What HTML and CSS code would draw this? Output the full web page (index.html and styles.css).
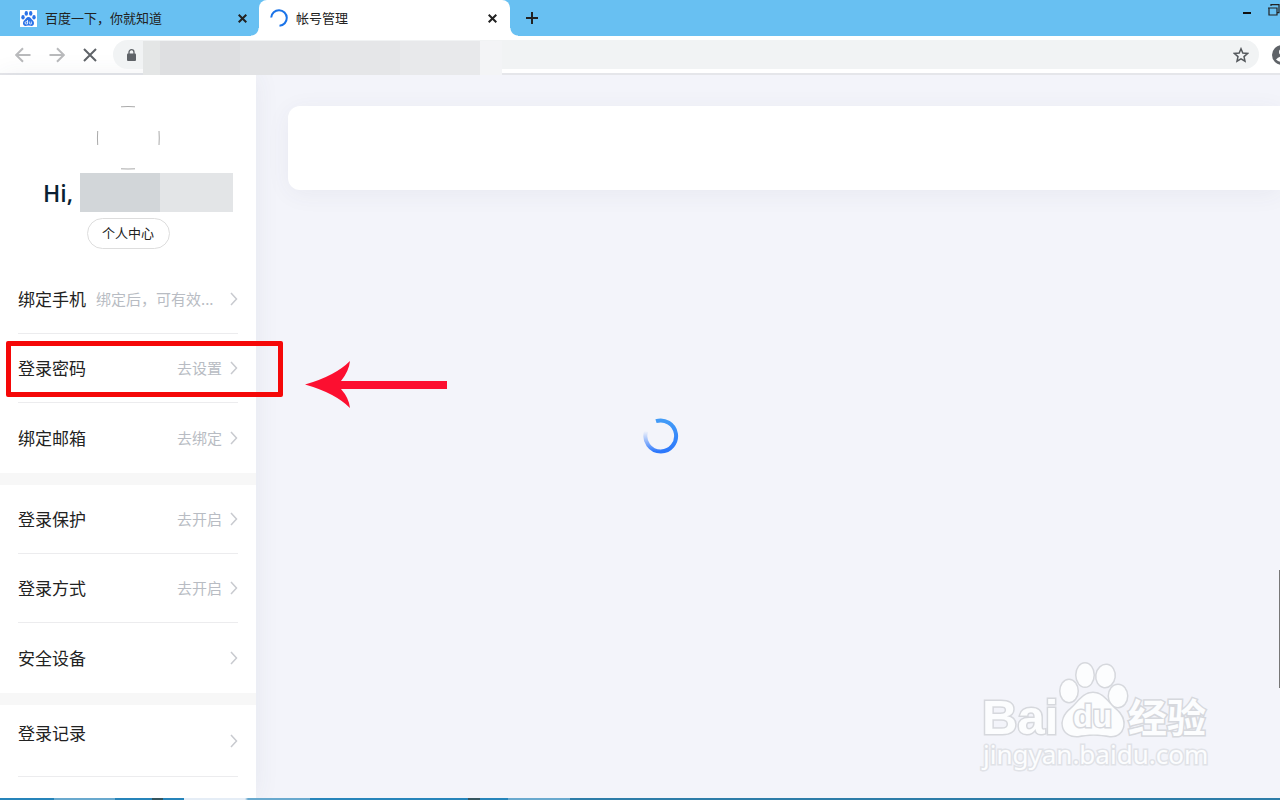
FILE: index.html
```
<!DOCTYPE html>
<html lang="zh-CN">
<head>
  <meta charset="UTF-8" />
  <meta name="viewport" content="width=device-width, initial-scale=1.0"/>
  <title>帐号管理</title>
  <link rel="stylesheet" href="styles.css">
</head>
<body>
  <header class="tabs">
    <div class="tab">
      <svg class="favicon" width="17" height="17" viewBox="0 0 17 17">
        <rect width="17" height="17" fill="#fff"/>
        <g fill="#2b73e8">
          <ellipse cx="3" cy="7.200" rx="1.700" ry="2.200"/>
          <ellipse cx="6.300" cy="3.400" rx="1.700" ry="2.300"/>
          <ellipse cx="10.700" cy="3.400" rx="1.700" ry="2.300"/>
          <ellipse cx="14" cy="7.200" rx="1.700" ry="2.200"/>
          <path d="M8.500 7c2.200 0 2.700 2 4.200 3.300 1.800 1.500 2 5.700-1.300 5.700-1.200 0-1.800-.4-2.900-.4s-1.700.4-2.900.4c-3.300 0-3.100-4.200-1.300-5.700C5.800 9 6.300 7 8.500 7z"/>
        </g>
        <path d="M7.500 10v4H6.200a1 1 0 0 1 0-2.300h1.300M9.300 11.500V13q0 1 1 1h1v-2.500" fill="none" stroke="#fff" stroke-width=".8"/>
      </svg>
      <span class="tab-title">百度一下，你就知道</span>
      <button class="tab-close" aria-label="关闭">
        <svg width="9" height="9" viewBox="0 0 9 9"><path d="M.7.7l7.600 7.600M8.300.7L.7 8.300"/></svg>
      </button>
    </div>
    <div class="tab active">
      <svg class="favicon" width="18" height="18" viewBox="0 0 18 18">
        <path d="M1.200 8.500A7.800 7.800 0 1 1 9.500 16.800" fill="none" stroke="#1a73e8" stroke-width="2"/>
      </svg>
      <span class="tab-title">帐号管理</span>
      <button class="tab-close" aria-label="关闭">
        <svg width="9" height="9" viewBox="0 0 9 9"><path d="M.7.7l7.600 7.600M8.300.7L.7 8.300"/></svg>
      </button>
    </div>
    <button class="new-tab" aria-label="新标签页">
      <svg width="12" height="12" viewBox="0 0 12 12"><path d="M6 0v12M0 6h12"/></svg>
    </button>
    <div class="window-buttons">
      <button aria-label="最小化"><svg width="8" height="12" viewBox="0 0 8 12"><path d="M0 9h8" stroke="#111" stroke-width="2"/></svg></button>
      <button aria-label="还原"><svg width="12" height="12" viewBox="0 0 12 12"><path d="M1 4h8v7H1zM0 4h9M3 2V.7h8v8H9.500" fill="none" stroke="#222" stroke-width="1.200"/></svg></button>
    </div>
  </header>

  <div class="toolbar">
    <button class="nav-btn dim" aria-label="后退"><svg width="16" height="16" viewBox="0 0 16 16"><path d="M15.500 8H1.500M8 1.200L1.200 8 8 14.800"/></svg></button>
    <button class="nav-btn dim" aria-label="前进"><svg width="16" height="16" viewBox="0 0 16 16"><path d="M.5 8h14M8 1.200L14.800 8 8 14.800"/></svg></button>
    <button class="nav-btn" aria-label="停止"><svg width="16" height="16" viewBox="0 0 16 16"><path d="M1 2l12 12M13 2L1 14"/></svg></button>
    <div class="address">
      <svg class="lock" width="9" height="12" viewBox="0 0 9 12"><rect y="4.500" width="9" height="7.500" rx="1" fill="#5f6368"/><path d="M2 5V3.200a2.500 2.500 0 0 1 5 0V5" fill="none" stroke="#5f6368" stroke-width="1.300"/></svg>
      <input class="url" type="text" aria-label="地址">
      <div class="url-mask"></div>
      <button class="star" aria-label="收藏"><svg width="16" height="16" viewBox="0 0 16 16"><path d="M8 1.800l1.800 4.300 4.700.4-3.500 3.100 1 4.600L8 11.800l-4 2.400 1-4.600L1.500 6.500l4.700-.4z" fill="none" stroke="#55595d" stroke-width="1.500"/></svg></button>
    </div>
    <button class="user" aria-label="用户"><svg width="20" height="20" viewBox="0 0 20 20"><circle cx="10" cy="10" r="10" fill="#5f6368"/><circle cx="10" cy="7" r="3" fill="#fff"/><path d="M4 14.500q6-6 12 0-6 5-12 0z" fill="#fff"/></svg></button>
  </div>

  <div class="page">
    <aside class="sidebar">
      <div class="profile">
        <svg class="avatar" width="64" height="64" viewBox="0 0 64 64">
          <path d="M25 .8Q32 .2 39 .8M25 62.800Q32 63.200 39 62.800M1.700 25Q1.200 32 1.700 39M63 25Q63.500 32 63 39" fill="none" stroke="#aaa"/>
        </svg>
        <div class="hello"><span>Hi,</span><span class="name-mask"></span></div>
        <button class="center-btn">个人中心</button>
      </div>
      <nav class="menu">
        <a class="item" href="#"><span class="label">绑定手机</span><span class="value tip">绑定后，可有效...</span><svg class="arrow" width="8" height="14" viewBox="0 0 8 14"><path d="M1 1l5.500 6L1 13"/></svg></a>
        <a class="item" href="#"><span class="label">登录密码</span><span class="value">去设置</span><svg class="arrow" width="8" height="14" viewBox="0 0 8 14"><path d="M1 1l5.500 6L1 13"/></svg></a>
        <a class="item" href="#"><span class="label">绑定邮箱</span><span class="value">去绑定</span><svg class="arrow" width="8" height="14" viewBox="0 0 8 14"><path d="M1 1l5.500 6L1 13"/></svg></a>
      </nav>
      <nav class="menu">
        <a class="item" href="#"><span class="label">登录保护</span><span class="value">去开启</span><svg class="arrow" width="8" height="14" viewBox="0 0 8 14"><path d="M1 1l5.500 6L1 13"/></svg></a>
        <a class="item" href="#"><span class="label">登录方式</span><span class="value">去开启</span><svg class="arrow" width="8" height="14" viewBox="0 0 8 14"><path d="M1 1l5.500 6L1 13"/></svg></a>
        <a class="item" href="#"><span class="label">安全设备</span><span class="value"></span><svg class="arrow" width="8" height="14" viewBox="0 0 8 14"><path d="M1 1l5.500 6L1 13"/></svg></a>
      </nav>
      <nav class="menu records">
        <a class="item" href="#"><span class="label">登录记录</span><span class="value"></span><svg class="arrow" width="8" height="14" viewBox="0 0 8 14"><path d="M1 1l5.500 6L1 13"/></svg></a>
      </nav>
    </aside>
    <main class="content">
      <section class="card"></section>
    </main>
  </div>
  <footer class="taskbar"></footer>

  <!-- loading ring -->
  <svg class="loader" width="36" height="36" viewBox="0 0 36 36">
    <defs>
      <linearGradient id="ring" x1="0" y1="0" x2="0" y2="1"><stop offset="0" stop-color="#429bf7"/><stop offset="1" stop-color="#2d78fc"/></linearGradient>
      <linearGradient id="tail" x1="0" y1="0" x2="0" y2="1"><stop offset="0" stop-color="#3d80fc" stop-opacity="0"/><stop offset="1" stop-color="#2d78fc"/></linearGradient>
    </defs>
    <path d="M13 3.200A15.500 15.500 0 1 1 18 33.500" fill="none" stroke="url(#ring)" stroke-width="4"/>
    <path d="M18 33.500A15.500 15.500 0 0 1 3.200 13" fill="none" stroke="url(#tail)" stroke-width="4"/>
  </svg>

  <!-- callout -->
  <div class="mark"></div>
  <svg class="mark-arrow" width="142" height="48" viewBox="0 0 142 48">
    <path d="M0 23.500Q30 15 45 0Q44 10 36 20H142V28H36Q44 37 45 47Q30 32 0 23.500z" fill="#fc0f30"/>
  </svg>

  <!-- watermark -->
  <svg class="watermark" width="240" height="120" viewBox="0 0 240 120">
    <g class="wm-shape">
      <ellipse cx="91" cy="29" rx="8.500" ry="11"/>
      <ellipse cx="107" cy="13" rx="8.500" ry="11.500"/>
      <ellipse cx="127.500" cy="14" rx="9" ry="11" transform="rotate(8 127.500 14)"/>
      <ellipse cx="140" cy="34" rx="9" ry="11"/>
      <path d="M115 31C125 31 129 40 137 47C151 58 146 75 132 74C122 72 109 72 100 74C84 75 79 58 93 47C101 40 105 31 115 31z"/>
    </g>
    <text class="wm-bai" x="4" y="72">Bai</text>
    <text class="wm-du" x="95" y="65">du</text>
    <text class="wm-cn" x="150" y="70">经验</text>
    <text class="wm-url" x="5" y="102">jingyan.baidu.com</text>
  </svg>
  <div class="scroll-thumb"></div>
</body>
</html>
```
FILE: styles.css
```
* {
  box-sizing: border-box;
}
body {
  margin: 0;
  height: 100vh;
  display: flex;
  flex-direction: column;
  overflow: hidden;
  position: relative;
  background: #f3f4fa;
  font-family: "Noto Sans CJK SC", sans-serif;
  color: #222;
}
button {
  display: flex;
  align-items: center;
  justify-content: center;
  padding: 0;
  border: none;
  background: none;
  flex: none;
}
.tabs {
  display: flex;
  flex: none;
  height: 36px;
  background: #68c0f2;
}
.tab {
  display: flex;
  align-items: center;
  width: 259px;
  padding: 0 11px 0 20px;
  font-size: 13px;
}
.tab.active {
  position: relative;
  width: 251px;
  padding: 0 12px 0 11px;
  background: #fff;
  border-radius: 8px 8px 0 0;
}
/* curved feet of the open tab */
.tab.active::before, .tab.active::after {
  content: "";
  position: absolute;
  bottom: 0;
  width: 8px;
  height: 8px;
}
.tab.active::before {
  right: 100%;
  background: radial-gradient(circle at 0 0, transparent 7px, #fff 8px);
}
.tab.active::after {
  left: 100%;
  background: radial-gradient(circle at 100% 0, transparent 7px, #fff 8px);
}
.favicon {
  flex: none;
  margin-right: 8px;
}
.tab-title {
  flex: 1;
  line-height: 20px;
}
.tab-close {
  width: 12px;
  height: 20px;
}
.tab-close path, .new-tab path {
  stroke: #222;
  stroke-width: 2;
}
.new-tab {
  width: 44px;
}
.window-buttons {
  display: flex;
  align-items: flex-start;
  gap: 17px;
  margin-left: auto;
  padding-top: 4px;
}
.toolbar {
  display: flex;
  align-items: flex-start;
  flex: none;
  height: 39px;
  padding: 4px 0 0 14px;
  background: #fff;
  border-bottom: 2px solid #e5e6ea;
}
.nav-btn {
  width: 18px;
  height: 30px;
  margin-right: 16px;
}
.nav-btn path {
  fill: none;
  stroke: #5f6368;
  stroke-width: 2;
}
.nav-btn.dim path {
  stroke: #b9babc;
}
.address {
  display: flex;
  align-items: center;
  position: relative;
  flex: 1;
  height: 29px;
  padding: 0 10px 0 14px;
  border-radius: 15px;
  background: #f1f3f4;
  margin-left: -3px;
}
.lock {
  flex: none;
}
.url {
  flex: 1;
  height: 24px;
  border: none;
  background: none;
}
/* covers the address */
.url-mask {
  position: absolute;
  left: 30px;
  top: 1px;
  width: 359px;
  height: 34px;
  background: linear-gradient(90deg, #e4e6e6 17px, #dedfe1 17px 97px, #e2e3e5 97px 177px, #e5e6e8 177px 257px, #e8e9eb 257px 337px, #f3f4f6 337px);
}
.user {
  width: 8px;
  height: 30px;
  margin-left: 13px;
  justify-content: flex-start;
}
.user svg {
  flex: none;
}
.page {
  display: flex;
  flex: 1;
  min-height: 0;
}
.sidebar {
  width: 256px;
  flex: none;
  overflow: hidden;
  background: #fff;
  box-shadow: 0 0 24px rgba(60, 70, 100, 0.07);
}
.profile {
  display: flex;
  flex-direction: column;
  align-items: center;
  height: 190px;
  padding-top: 31px;
}
.avatar {
  flex: none;
}
.hello {
  display: flex;
  align-items: center;
  align-self: stretch;
  gap: 7px;
  margin: 3px 23px 6px 43px;
  font-family: "Open Sans", sans-serif;
  font-size: 23px;
  font-weight: 600;
  line-height: 39px;
  color: #0a1f33;
}
.hello span {
  padding-top: 2px;
}
.name-mask {
  flex: 1;
  height: 39px;
  background: linear-gradient(90deg, #d2d6d9 80px, #e3e5e7 80px);
}
.center-btn {
  width: 83px;
  height: 31px;
  padding-bottom: 2px;
  border: 1px solid #ddd;
  border-radius: 16px;
  font: inherit;
  font-size: 13px;
  color: #222;
}
.hello {
  height: 39px;
}
.menu {
  padding: 0 18px;
  border-bottom: 12px solid #f7f7f7;
}
.item {
  display: flex;
  align-items: center;
  height: 69px;
  border-bottom: 1px solid #ececee;
  color: #222;
  text-decoration: none;
}
.item:last-child {
  height: 70px;
  border-bottom: none;
}
.label, .value {
  line-height: 24px;
  white-space: nowrap;
}
.label {
  padding-bottom: 1px;
  font-size: 17px;
}
.value {
  flex: 1;
  font-size: 15px;
  text-align: right;
  color: #b8bcc3;
}
.tip {
  padding-left: 10px;
  text-align: left;
}
.arrow {
  flex: none;
  margin-left: 8px;
}
.arrow path {
  fill: none;
  stroke: #c8cacf;
  stroke-width: 1.5;
}
.records {
  border-bottom: none;
}
.records .item:last-child {
  height: 72px;
  border-bottom: 1px solid #ececee;
}
.records .label {
  padding-bottom: 15px;
}
.content {
  flex: 1;
  padding: 31px 0 0 32px;
}
.card {
  height: 84px;
  border-radius: 12px 0 0 12px;
  background: #fff;
  box-shadow: 0 4px 24px rgba(60, 70, 100, 0.06);
}
.taskbar {
  flex: none;
  height: 2px;
  background: linear-gradient(90deg, #2684ba 54px, #69a9ce 54px 115px, #2684ba 115px 152px, #35555e 152px 163px, #2684ba 163px 184px, #e5edf6 184px 245px, #69a9ce 248px 310px, #2684ba 310px 468px, #35555e 468px 480px, #2684ba 480px 508px, #69a9ce 508px 570px, #2d7ca8 570px);
}
.loader {
  position: absolute;
  left: 643px;
  top: 418px;
}
.mark {
  position: absolute;
  left: 6px;
  top: 341px;
  width: 277px;
  height: 56px;
  border: 5px solid #f50808;
  border-radius: 2px;
}
.mark-arrow {
  position: absolute;
  left: 305px;
  top: 361px;
}
.watermark {
  position: absolute;
  right: 62px;
  bottom: 18px;
}
.wm-shape, .watermark text {
  fill: #fcfdfe;
  stroke: #d6d8dd;
  stroke-width: 3;
  paint-order: stroke;
}
.wm-bai {
  font: 700 49px "Liberation Sans", sans-serif;
}
.wm-du {
  font: 700 32px "Liberation Sans", sans-serif;
}
.wm-cn {
  font: 700 39px "Noto Sans CJK SC", sans-serif;
}
.watermark .wm-url {
  font: 400 26px "Noto Sans", sans-serif;
  stroke: #e0e2e7;
}
.scroll-thumb {
  position: absolute;
  right: 0;
  top: 570px;
  width: 1px;
  height: 118px;
  background: #777;
}
```
